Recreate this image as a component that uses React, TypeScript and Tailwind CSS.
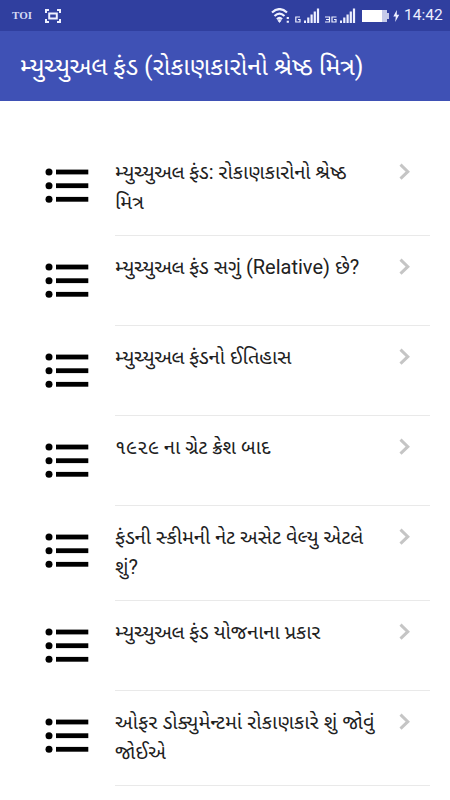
type Item = { lines: string[]; tall?: boolean; wide?: boolean };

const FIRST = "મ્યુચ્યુઅલ";

const items: Item[] = [
  { lines: ["મ્યુચ્યુઅલ ફંડ: રોકાણકારોનો શ્રેષ્ઠ", "મિત્ર"], tall: true },
  { lines: ["મ્યુચ્યુઅલ ફંડ સગું (Relative) છે?"] },
  { lines: ["મ્યુચ્યુઅલ ફંડનો ઈતિહાસ"] },
  { lines: ["૧૯૨૯ ના ગ્રેટ ક્રેશ બાદ"] },
  { lines: ["ફંડની સ્કીમની નેટ અસેટ વેલ્યુ એટલે", "શું?"], tall: true },
  { lines: ["મ્યુચ્યુઅલ ફંડ યોજનાના પ્રકાર"] },
  { lines: ["ઓફર ડોક્યુમેન્ટમાં રોકાણકારે શું જોવું", "જોઈએ"], tall: true, wide: true },
];

function Label({ text }: { text: string }) {
  if (!text.startsWith(FIRST)) return <span>{text}</span>;
  return (
    <>
      <span className="tracking-[-0.5px]">{FIRST}</span>
      <span>{text.slice(FIRST.length)}</span>
    </>
  );
}

function ListIcon() {
  return (
    <svg className="mt-[26px] ml-[45px] h-9 w-11 shrink-0" viewBox="0 0 44 36">
      {[5, 18.7, 32.3].map((y) => (
        <g key={y}>
          <circle cx="4" cy={y} r="3.5" />
          <rect x="11" y={y - 2.4} width="32.3" height="4.8" />
        </g>
      ))}
    </svg>
  );
}

function Chevron() {
  return (
    <svg className="absolute top-[22px] right-[19px] h-[18px] w-3" viewBox="0 0 12 18" fill="none" stroke="#c5c5c5" strokeWidth="3">
      <path d="M1.5 1.7 L8.8 8.7 L1.5 15.7" />
    </svg>
  );
}

function Signal() {
  return (
    <svg className="h-4 w-4" viewBox="0 0 16 16" fill="#eef0ff">
      <rect x="0" y="12.5" width="2" height="2.5" />
      <rect x="3.2" y="9.5" width="2.2" height="5.5" />
      <rect x="6.5" y="6.5" width="2.2" height="8.5" />
      <rect x="9.7" y="3.5" width="2.2" height="11.5" />
      <rect x="12.9" y="0.5" width="2.2" height="14.5" />
    </svg>
  );
}

function StatusBar() {
  return (
    <div className="flex h-[31px] items-center bg-[#303f9f] pl-3 text-[#eef0ff]">
      <span className="w-[33px] font-['Liberation_Serif',serif] text-[11px] leading-none font-bold text-[#d5d9f5]">TOI</span>
      <svg className="h-[14px] w-4" viewBox="0 0 16 14" fill="none" stroke="#eef0ff" strokeWidth="2">
        <path d="M1 4V1H4 M12 1H15V4 M15 10V13H12 M4 13H1V10" />
        <rect x="4.2" y="4.5" width="7.6" height="5" />
      </svg>
      <svg className="ml-[210px] h-4 w-5" viewBox="0 0 20 16" fill="none" stroke="#eef0ff" strokeWidth="2.2">
        <path d="M1 4.5 Q8.5 -2.3 16 4.5 M3.5 8 Q8.5 3.4 13.5 8 M6 11.2 Q8.5 8.6 11 11.2" />
        <path d="M7 12.4 L8.5 11.2 L10 12.4 L8.5 14.4Z" fill="#eef0ff" strokeWidth="1" />
        <path d="M16.8 9V11 M16.8 12.8V14.8" />
      </svg>
      <svg className="ml-1 mt-2 h-[7px] w-[6px]" viewBox="0 0 6 7" fill="none" stroke="#eef0ff" strokeWidth="1.2">
        <path d="M5 1H.8V6H5V3.5H3" />
      </svg>
      <div className="ml-[3px]"><Signal /></div>
      <svg className="ml-[5px] mt-2 h-[7px] w-[12px]" viewBox="0 0 12 7" fill="none" stroke="#eef0ff" strokeWidth="1.2">
        <path d="M0 1H4.5V6H0 M1 3.5H4.5 M11.5 1H7V6H11V3.5H9" />
      </svg>
      <div className="ml-[3px]"><Signal /></div>
      <svg className="ml-[6px] h-[14px] w-[28px]" viewBox="0 0 28 14">
        <path d="M0 1H20V13H0Z" fill="#fff" />
        <path d="M20 1H25V4H27V10H25V13H20Z" fill="#c5cae9" />
      </svg>
      <svg className="ml-[3px] h-3 w-[7px]" viewBox="0 0 7 12" fill="#eef0ff">
        <path d="M3.8 0L.3 6.6H2.8L2.2 12L6.2 4.8H3.8Z" />
      </svg>
      <span className="mt-px ml-[4px] font-['Roboto',sans-serif] text-[15.5px] leading-none whitespace-nowrap">14:42</span>
    </div>
  );
}

export default function App() {
  return (
    <div className="h-[800px] w-[450px] overflow-hidden bg-white font-['Roboto','Noto_Sans_Gujarati','Noto_Sans',sans-serif] text-[#212121]">
      <StatusBar />
      <header className="flex h-[70px] items-center bg-[#3f51b5] pt-[2px] pl-5 text-white">
        <h1 className="text-[25px] leading-[36px] whitespace-nowrap">
          <Label text="મ્યુચ્યુઅલ ફંડ (રોકાણકારોનો શ્રેષ્ઠ મિત્ર)" />
        </h1>
      </header>
      <main className="pt-10">
        {items.map((item) => (
          <div key={item.lines[0]} className={item.tall ? "flex h-[95px]" : "flex h-[90px]"}>
            <ListIcon />
            <div className="relative ml-[26px] w-[315px] border-b-[1.5px] border-[#e9e9e9] pt-[17px] text-[20px] leading-[29.5px]">
              {item.lines.map((line) => (
                <p key={line} className={item.wide ? "whitespace-nowrap tracking-[0.15px]" : "whitespace-nowrap"}>
                  <Label text={line} />
                </p>
              ))}
              <Chevron />
            </div>
          </div>
        ))}
      </main>
    </div>
  );
}
